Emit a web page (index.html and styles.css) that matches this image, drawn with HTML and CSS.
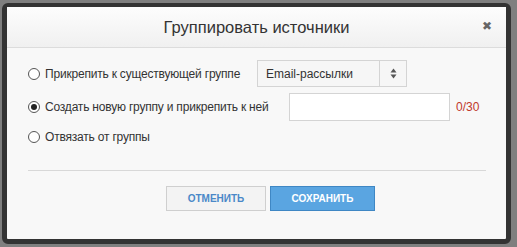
FILE: index.html
```html
<!DOCTYPE html>
<html lang="ru">
<head>
    <meta charset="UTF-8">
    <meta name="viewport" content="width=device-width, initial-scale=1.0">
    <title>Группировать источники</title>
    <link rel="stylesheet" href="styles.css">
</head>
<body>
    <div class="modal">
        <div class="modal-header">
            <span class="modal-title">Группировать источники</span>
            <span class="close-btn">&#10006;</span>
        </div>

        <div class="modal-body">
            <div class="option-row">
                <label class="option">
                    <span class="radio"></span>
                    Прикрепить к существующей группе
                </label>
                <div class="select-box">
                    <span class="select-value">Email-рассылки</span>
                    <span class="select-arrow">
                        <svg width="7" height="11" viewBox="0 0 7 11">
                            <path d="M3.5 0.5 L6.5 4.5 L0.5 4.5 Z" fill="#555"/>
                            <path d="M0.5 6.5 L6.5 6.5 L3.5 10.5 Z" fill="#555"/>
                        </svg>
                    </span>
                </div>
            </div>

            <div class="option-row">
                <label class="option">
                    <span class="radio checked"></span>
                    Создать новую группу и прикрепить к ней
                </label>
                <input type="text" class="text-input">
                <span class="counter">0/30</span>
            </div>

            <div class="option-row short">
                <label class="option">
                    <span class="radio"></span>
                    Отвязать от группы
                </label>
            </div>

            <div class="divider"></div>

            <div class="buttons">
                <button class="btn btn-cancel">Отменить</button>
                <button class="btn btn-save">Сохранить</button>
            </div>
        </div>
    </div>
</body>
</html>
```

FILE: styles.css
```css
body {
    margin: 0;
    background-color: #7f7f7f;
    font-family: "Liberation Sans", Arial, sans-serif;
    color: #333;
}

.modal {
    box-sizing: border-box;
    width: 509px;
    height: 241px;
    margin: 3px 0 0 2px;
    background: #f8f8f8;
    border: 5px solid #333;
    border-top-width: 4px;
    border-radius: 6px;
    display: flex;
    flex-direction: column;
}

.modal-header {
    height: 40px;
    display: flex;
    align-items: center;
    justify-content: center;
    position: relative;
    background: linear-gradient(#fdfdfd, #f0f0f0);
    border-bottom: 1px solid #dcdcdc;
}

.modal-title {
    font-size: 16.5px;
    color: #333;
}

.close-btn {
    position: absolute;
    right: 14px;
    top: 12px;
    font-size: 12px;
    color: #666;
    font-family: "DejaVu Sans", sans-serif;
}

.modal-body {
    padding: 12px 20px 0 21px;
    display: flex;
    flex-direction: column;
}

.option-row {
    display: flex;
    align-items: center;
    height: 27px;
    margin-bottom: 6px;
}

.option-row + .option-row {
    height: 28px;
}

.option-row.short {
    height: 20px;
}

.option {
    display: flex;
    align-items: center;
    font-size: 12px;
    letter-spacing: -0.2px;
    color: #333;
    width: 229px;
    white-space: nowrap;
}

.radio {
    box-sizing: border-box;
    flex: none;
    width: 12px;
    height: 12px;
    border: 1px solid #555;
    border-radius: 50%;
    background: #fff;
    margin-right: 5px;
    position: relative;
}

.radio.checked::after {
    content: "";
    position: absolute;
    left: 2px;
    top: 2px;
    width: 6px;
    height: 6px;
    border-radius: 50%;
    background: #222;
}

.select-box {
    box-sizing: border-box;
    width: 150px;
    height: 27px;
    border: 1px solid #d4d4d4;
    background: #f6f6f6;
    display: flex;
    align-items: stretch;
}

.select-value {
    flex: 1;
    font-size: 12px;
    padding-left: 8px;
    display: flex;
    align-items: center;
    border-right: 1px solid #d4d4d4;
}

.select-arrow {
    width: 26px;
    display: flex;
    align-items: center;
    justify-content: center;
}

.text-input {
    box-sizing: border-box;
    width: 161px;
    height: 28px;
    margin-left: 32px;
    border: 1px solid #d4d4d4;
    background: #fff;
    outline: none;
}

.counter {
    font-size: 12px;
    color: #c0392b;
    margin-left: 6px;
}

.divider {
    height: 1px;
    background: #d8d8d8;
    margin-top: 17px;
    width: 458px;
}

.buttons {
    display: flex;
    gap: 4px;
    margin: 15px 0 0 138px;
}

.btn {
    box-sizing: border-box;
    height: 25px;
    font-family: "Liberation Sans", Arial, sans-serif;
    font-size: 10px;
    font-weight: bold;
    text-transform: uppercase;
    cursor: pointer;
}

.btn-cancel {
    width: 100px;
    background: #f3f3f3;
    border: 1px solid #cfcfcf;
    color: #4a88c8;
}

.btn-save {
    width: 105px;
    background: #5aa5e1;
    border: 1px solid #3f87c4;
    color: #fff;
}
```
